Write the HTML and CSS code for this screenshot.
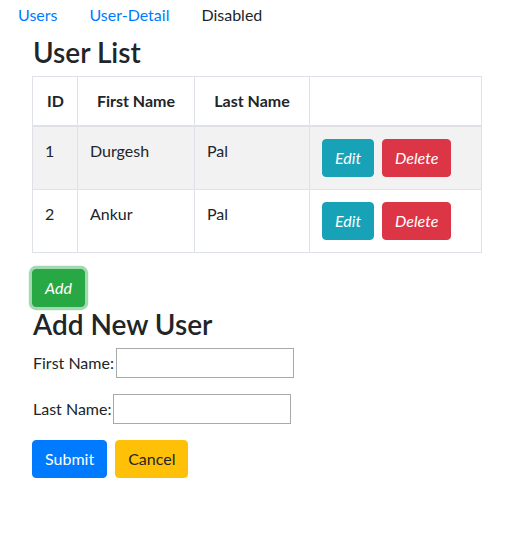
FILE: index.html
```html
<!DOCTYPE html>
<html lang="en">
<head>
<meta charset="utf-8">
<title>User List</title>
<link rel="stylesheet" href="styles.css">
</head>
<body>
<nav class="nav">
  <a class="nav-link" href="#">Users</a>
  <a class="nav-link" href="#">User-Detail</a>
  <span class="nav-link disabled">Disabled</span>
</nav>
<main class="container">
  <h3 class="heading">User List</h3>
  <table class="table">
    <colgroup>
      <col class="c-id">
      <col class="c-first">
      <col class="c-last">
      <col class="c-act">
    </colgroup>
    <thead>
      <tr><th>ID</th><th>First Name</th><th>Last Name</th><th></th></tr>
    </thead>
    <tbody>
      <tr class="striped">
        <td>1</td><td>Durgesh</td><td>Pal</td>
        <td><div class="actions"><button class="btn btn-info">Edit</button><button class="btn btn-danger">Delete</button></div></td>
      </tr>
      <tr>
        <td>2</td><td>Ankur</td><td>Pal</td>
        <td><div class="actions"><button class="btn btn-info">Edit</button><button class="btn btn-danger">Delete</button></div></td>
      </tr>
    </tbody>
  </table>
  <div class="add-wrap"><button class="btn btn-success focused">Add</button></div>
  <h3 class="heading">Add New User</h3>
  <form class="form">
    <div class="form-row"><label class="label">First Name:</label><input class="input" type="text"></div>
    <div class="form-row"><label class="label">Last Name:</label><input class="input" type="text"></div>
    <div class="form-actions">
      <button type="button" class="btn btn-primary upright">Submit</button>
      <button type="button" class="btn btn-warning upright">Cancel</button>
    </div>
  </form>
</main>
</body>
</html>
```
FILE: styles.css
```css
* { box-sizing: border-box; }
html, body {
  margin: 0;
  background: #fff;
  color: #212529;
  font-family: Lato, "Open Sans", sans-serif;
  font-size: 16px;
  line-height: 24px;
}
.nav {
  display: flex;
  height: 35px;
  margin-left: 2px;
}
.nav-link {
  padding: 3px 16px 0;
  color: #007bff;
  text-decoration: none;
  line-height: 24px;
}
.nav-link.disabled { color: #212529; }
.container {
  padding-left: 32px;
  width: 482px;
}
.heading {
  margin: 0 0 7px;
  font-size: 28px;
  font-weight: 600;
  line-height: 34px;
  padding-left: 1px;
}
.table {
  width: 449px;
  border-collapse: collapse;
  table-layout: fixed;
  margin-bottom: 16px;
}
.c-id { width: 45px; }
.c-first { width: 117px; }
.c-last { width: 115px; }
.c-act { width: 172px; }
.table th, .table td {
  border: 1px solid #dee2e6;
  padding: 12px;
  vertical-align: top;
}
.table th {
  font-weight: 700;
  text-align: center;
  border-bottom-width: 2px;
}
.table th:first-child { text-align: left; padding-left: 14px; }
.striped td { background: #f2f2f2; }
.actions {
  display: flex;
  gap: 8px;
}
.btn {
  display: inline-block;
  font-family: inherit;
  font-size: 16px;
  line-height: 24px;
  font-style: italic;
  padding: 6px 12px;
  border: 1px solid transparent;
  border-radius: 4px;
  color: #fff;
  cursor: pointer;
}
.btn.upright { font-style: normal; }
.btn-info { background: #17a2b8; border-color: #17a2b8; }
.btn-danger { background: #dc3545; border-color: #dc3545; }
.btn-success { background: #28a745; border-color: #28a745; }
.btn-primary { background: #007bff; border-color: #007bff; }
.btn-warning { background: #ffc107; border-color: #ffc107; color: #212529; }
.focused { box-shadow: 0 0 0 3.2px rgba(72, 180, 97, 0.5); }
.add-wrap { height: 38px; display: flex; }
.form { margin: 0; }
.form-row {
  display: flex;
  align-items: center;
  gap: 2px;
  height: 30px;
  margin-bottom: 16px;
  padding-left: 1px;
}
.label { line-height: 24px; }
.input {
  width: 178px;
  height: 30px;
  border: 1px solid #a9a9a9;
  border-radius: 0;
  background: #fff;
  font-family: inherit;
  font-size: 16px;
  padding: 2px 4px;
}
.form-actions {
  display: flex;
  gap: 8px;
}
```
